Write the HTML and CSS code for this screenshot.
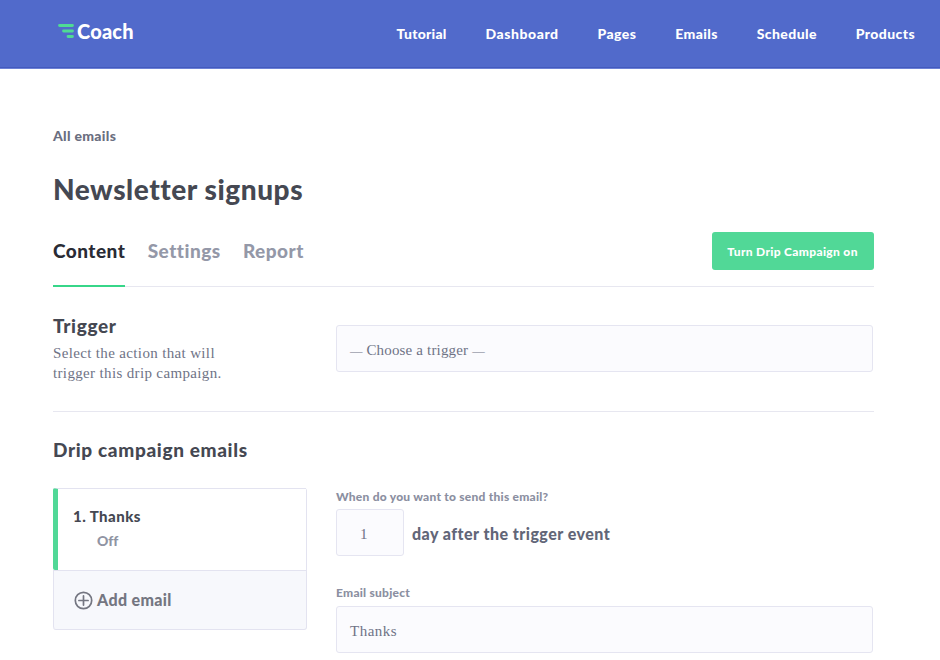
FILE: index.html
```html
<!DOCTYPE html>
<html lang="en">
<head>
<meta charset="utf-8">
<title>Coach</title>
<link rel="stylesheet" href="styles.css">
</head>
<body>
<header class="topbar">
  <a class="logo">
    <svg class="logo-mark" width="16" height="14" viewBox="0 0 16 14" fill="none" stroke="#4fdb94" stroke-width="2.8" stroke-linecap="round">
      <path d="M1.5 1.5H14.5M5.5 7H14.5M10 12.5H14.5"/>
    </svg>
    <span>Coach</span>
  </a>
  <nav class="nav">
    <a class="nav-first">Tutorial</a><a class="nav-wide">Dashboard</a><a>Pages</a><a>Emails</a><a>Schedule</a><a>Products</a>
  </nav>
</header>
<main class="page">
  <a class="back">All emails</a>
  <h1>Newsletter signups</h1>
  <div class="tabbar">
    <nav class="tabs">
      <a class="tab active">Content</a><a class="tab">Settings</a><a class="tab">Report</a>
    </nav>
    <button class="primary">Turn Drip Campaign on</button>
  </div>
  <section class="trigger">
    <div>
      <h2>Trigger</h2>
      <p>Select the action that will<br>trigger this drip campaign.</p>
    </div>
    <div class="field select"><span class="dash">—</span> Choose a trigger <span class="dash">—</span></div>
  </section>
  <h2 class="emails-title">Drip campaign emails</h2>
  <section class="emails">
    <div class="list">
      <div class="item">
        <div class="item-name">1. Thanks</div>
        <div class="item-status">Off</div>
      </div>
      <div class="add">
        <svg class="add-icon" width="19" height="19" viewBox="0 0 19 19" fill="none" stroke="#747681" stroke-width="1.7" stroke-linecap="round">
          <circle cx="9.5" cy="9.5" r="8.2"/><path d="M9.5 4.9V14.1M4.9 9.5H14.1"/>
        </svg>
        <span>Add email</span>
      </div>
    </div>
    <div class="form">
      <label class="label">When do you want to send this email?</label>
      <div class="delay">
        <div class="field days">1</div>
        <span>day after the trigger event</span>
      </div>
      <label class="label subject-label">Email subject</label>
      <div class="field subject">Thanks</div>
    </div>
  </section>
</main>
</body>
</html>
```
FILE: styles.css
```css
* { box-sizing: border-box; }

body {
  margin: 0;
  height: 660px;
  overflow: hidden;
  background: #fff;
  color: #454852;
  font-family: Lato, sans-serif;
  font-weight: 700;
  font-variant-ligatures: none;
}

h1, h2, p { margin: 0; }

.topbar {
  display: flex;
  justify-content: space-between;
  height: 69px;
  padding: 0 25px 0 58px;
  background: #516acb;
  border-bottom: 1px solid #6c81d4;
  box-shadow: inset 0 -1px #435abf;
  color: #fff;
}

.logo {
  display: flex;
  gap: 3px;
  padding-top: 19px;
  font-size: 20px;
  line-height: 24px;
  font-weight: 900;
  letter-spacing: .2px;
}
.logo-mark { margin-top: 5px; }

.nav {
  display: flex;
  gap: 38.9px;
  padding-top: 24px;
  font-size: 14px;
  line-height: 20px;
  font-weight: 900;
  letter-spacing: .4px;
}
.nav-first { letter-spacing: .25px; }
.nav-wide { letter-spacing: .55px; }

.page {
  width: 821px;
  margin-left: 53px;
  padding-top: 57px;
}

.back {
  display: block;
  font-size: 14px;
  line-height: 20px;
  font-weight: 900;
  letter-spacing: .3px;
  color: #6a6e80;
}

h1 {
  margin-top: 25px;
  font-size: 28px;
  line-height: 36px;
  font-weight: 900;
  letter-spacing: .55px;
}

.tabbar {
  display: flex;
  justify-content: space-between;
  height: 80px;
  border-bottom: 1px solid #e7e7f0;
}
.tabs {
  display: flex;
  gap: 22.3px;
  font-size: 19px;
  line-height: 24px;
  letter-spacing: .48px;
}
.tab {
  height: 80px;
  padding-top: 32px;
  color: #9498a8;
  font-weight: 900;
}
.tab.active {
  color: #292b35;
  border-bottom: 2px solid #37d689;
}
.primary {
  width: 162px;
  height: 38px;
  margin-top: 25px;
  padding: 1px 1px 0 0;
  border: 0;
  border-radius: 3px;
  background: #51d897;
  color: #fff;
  font: 900 12px/37px Lato, sans-serif;
  letter-spacing: .33px;
}

.trigger {
  display: grid;
  grid-template-columns: 283px 537px;
  height: 125px;
  padding-top: 26px;
  border-bottom: 1px solid #e7e7f0;
}
h2 {
  font-size: 19px;
  line-height: 26px;
  font-weight: 900;
  letter-spacing: .65px;
}
.trigger p {
  margin-top: 5px;
  font: 400 15px/19.5px "Liberation Serif", serif;
  letter-spacing: .35px;
  color: #6f7386;
}

.field {
  height: 47px;
  padding: 2px 13px 0;
  border: 1px solid #e5e5f1;
  border-radius: 3px;
  background: #fbfbfe;
  font: 400 15px/45px "Liberation Serif", serif;
  color: #6f7386;
}
.select { margin-top: 12px; letter-spacing: .17px; }
.dash { font-size: 12.5px; letter-spacing: 0; }
.subject { letter-spacing: .5px; }

.emails-title { margin-top: 25px; }

.emails {
  display: grid;
  grid-template-columns: 254px 537px;
  column-gap: 29px;
  align-items: start;
  margin-top: 25px;
}
.list {
  height: 142px;
  border: 1px solid #e3e3f0;
  border-left: 0;
  border-radius: 3px;
  background: #f7f8fc;
}
.item {
  height: 82px;
  margin-top: -1px;
  padding: 16px 0 0 15px;
  border-top: 1px solid #e3e3f0;
  border-left: 5px solid #51d897;
  border-radius: 2px 0 0 2px;
  background: #fff;
  background-clip: padding-box;
  font-weight: 900;
}
.item-name { font-size: 15px; line-height: 22px; letter-spacing: .45px; }
.item-status {
  margin: 4px 0 0 24px;
  font-size: 14px;
  line-height: 20px;
  color: #9094a3;
}
.add {
  display: flex;
  align-items: center;
  gap: 4px;
  height: 59px;
  padding: 0 0 1px 20px;
  border-top: 1px solid #e3e3f0;
  border-left: 1px solid #e3e3f0;
  border-radius: 0 0 0 3px;
  font-size: 16px;
  line-height: 20px;
  font-weight: 900;
  letter-spacing: .35px;
  color: #747681;
}
.add-icon { margin-top: 2px; }

.label {
  display: block;
  margin-top: 1px;
  font-size: 12px;
  line-height: 16px;
  font-weight: 900;
  letter-spacing: .24px;
  color: #8b8fa1;
}
.delay {
  display: flex;
  gap: 8px;
  height: 47px;
  margin-top: 4px;
  font-size: 16px;
  line-height: 50px;
  font-weight: 900;
  letter-spacing: .46px;
  color: #626678;
}
.days { width: 68px; padding-left: 23px; }
.subject-label { margin: 29px 0 5px; }
```
